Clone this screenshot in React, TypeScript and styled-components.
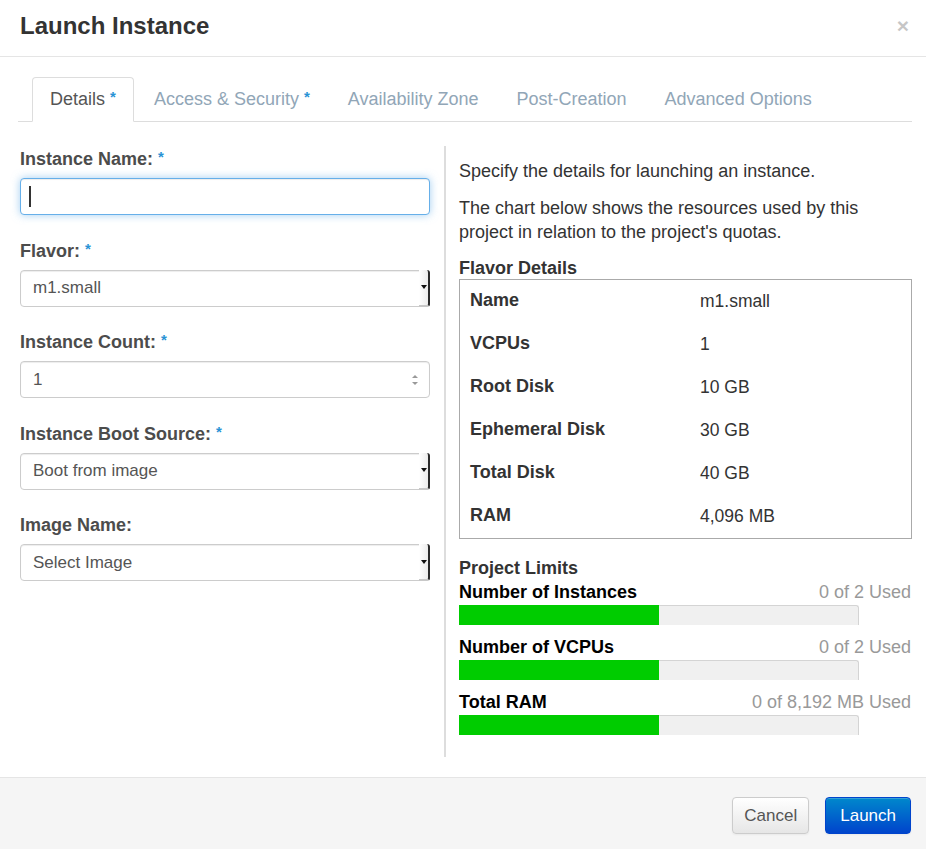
import React from "react";
import styled, { createGlobalStyle } from "styled-components";

const GlobalStyle = createGlobalStyle`
    html, body {
        margin: 0;
        padding: 0;
        background: #fff;
    }
    body {
        font-family: "Liberation Sans", Arial, Helvetica, sans-serif;
        color: #333;
    }
`;

const Modal = styled.div`
    width: 926px;
    height: 849px;
    display: flex;
    flex-direction: column;
    background: #fff;
    overflow: hidden;
`;

const Header = styled.div`
    display: flex;
    align-items: center;
    justify-content: space-between;
    padding: 0 17px 0 20px;
    border-bottom: 1px solid #e5e5e5;
    box-sizing: border-box;
    height: 57px;
`;

const Title = styled.h3`
    margin: 0 0 4px;
    font-size: 24px;
    font-weight: bold;
    line-height: 26px;
    color: #333;
`;

const Close = styled.span`
    font-size: 21px;
    font-weight: bold;
    line-height: 1;
    color: #000;
    opacity: 0.22;
    margin-bottom: 6px;
`;

const Body = styled.div`
    flex: 1;
    padding: 20px 14px 20px 18px;
    display: flex;
    flex-direction: column;
    min-height: 0;
`;

const Tabs = styled.ul`
    display: flex;
    margin: 0;
    padding: 0 0 0 14px;
    list-style: none;
    border-bottom: 1px solid #ddd;
    height: 44px;
`;

const Tab = styled.li<{ $active?: boolean }>`
    margin-right: 2px;
    margin-bottom: -1px;
    padding: 10px 17px 12px;
    font-size: 18px;
    line-height: 22px;
    border: 1px solid ${(p) => (p.$active ? "#ddd" : "transparent")};
    border-bottom-color: ${(p) => (p.$active ? "#fff" : "transparent")};
    border-radius: 4px 4px 0 0;
    background: ${(p) => (p.$active ? "#fff" : "transparent")};
    color: ${(p) => (p.$active ? "#555" : "#91a6b7")};
    white-space: nowrap;
`;

const Req = styled.span`
    display: inline-block;
    line-height: 0;
    color: #2a93d5;
    font-weight: bold;
    font-size: 15px;
    vertical-align: 3px;
`;

const Columns = styled.div`
    flex: 1;
    display: grid;
    grid-template-columns: 410px 1fr;
    column-gap: 14px;
    margin-top: 24px;
    padding-left: 2px;
    min-height: 0;
`;

const LeftCol = styled.div`
    padding-top: 2px;
`;

const FormGroup = styled.div`
    margin-bottom: 24.5px;
`;

const Label = styled.div`
    font-size: 18px;
    line-height: 22px;
    height: 22px;
    font-weight: bold;
    color: #4c4c4c;
    margin-bottom: 8px;
`;

const Field = styled.div<{ $focus?: boolean }>`
    height: 37px;
    box-sizing: border-box;
    display: flex;
    align-items: center;
    justify-content: space-between;
    padding-left: 12px;
    border: 1px solid ${(p) => (p.$focus ? "#66afe9" : "#ccc")};
    border-radius: 4px;
    background: #fff;
    font-size: 17px;
    color: #555;
    box-shadow: ${(p) =>
        p.$focus
            ? "inset 0 1px 1px rgba(0,0,0,.075), 0 0 8px rgba(102,175,233,.6)"
            : "inset 0 1px 1px rgba(0,0,0,.075)"};
`;

const Caret = styled.span`
    width: 2px;
    height: 21px;
    background: #333;
    margin-left: -4px;
`;

const SelectArrow = styled.span`
    align-self: stretch;
    width: 9px;
    margin: -1px -1px -1px 0;
    display: flex;
    align-items: center;
    justify-content: center;
    background: linear-gradient(to right, #fff, #ececec);
    border-right: 2px solid #2a2a2a;
    border-bottom: 2px solid #c8c8c8;
    border-radius: 0 3px 3px 0;
    &::after {
        content: "";
        border-left: 3px solid transparent;
        border-right: 3px solid transparent;
        border-top: 4px solid #111;
    }
`;

const Spinner = styled.span`
    display: flex;
    flex-direction: column;
    gap: 4px;
    margin-right: 11px;
    &::before,
    &::after {
        content: "";
        border-left: 3px solid transparent;
        border-right: 3px solid transparent;
    }
    &::before {
        border-bottom: 3px solid #999;
    }
    &::after {
        border-top: 3px solid #999;
    }
`;

const RightCol = styled.div`
    border-left: 2px solid #ddd;
    padding: 13px 0 0 13px;
    overflow: hidden;
`;

const Para = styled.p`
    margin: 0 0 13px;
    font-size: 18px;
    line-height: 24px;
    color: #333;
`;

const SubHead = styled.h4<{ $gap?: number }>`
    margin: ${(p) => p.$gap ?? 0}px 0 0;
    font-size: 18px;
    line-height: 22px;
    font-weight: bold;
    color: #333;
`;

const DetailTable = styled.div`
    border: 1px solid #aaa;
    display: grid;
    grid-template-columns: 230px 1fr;
    grid-auto-rows: 43px;
    padding-left: 10px;
`;

const Cell = styled.div<{ $head?: boolean }>`
    display: flex;
    align-items: center;
    padding-bottom: ${(p) => (p.$head ? "3px" : "0")};
    font-size: ${(p) => (p.$head ? "18px" : "17.5px")};
    font-weight: ${(p) => (p.$head ? "bold" : "normal")};
    color: #333;
`;

const Quota = styled.div`
    width: 452px;
    margin-top: 2px;
    margin-bottom: 11px;
`;

const QuotaHead = styled.div`
    display: flex;
    justify-content: space-between;
    align-items: center;
    height: 22px;
    line-height: 22px;
    margin-bottom: 2px;
`;

const QuotaName = styled.span`
    font-size: 18px;
    font-weight: bold;
    color: #000;
`;

const QuotaUsed = styled.span`
    font-size: 18px;
    color: #999;
`;

const Track = styled.div`
    position: relative;
    width: 400px;
    height: 20px;
    box-sizing: border-box;
    background: #f0f0f0;
    border-top: 1px solid #d4d4d4;
    border-right: 1px solid #d4d4d4;
    border-radius: 0 3px 0 0;
`;

const Fill = styled.div`
    position: absolute;
    top: -1px;
    left: 0;
    bottom: 0;
    background: #00cc00;
`;

const Footer = styled.div`
    height: 72px;
    box-sizing: border-box;
    border-top: 1px solid #e5e5e5;
    background: #f5f5f5;
    display: flex;
    justify-content: flex-end;
    align-items: flex-start;
    gap: 16px;
    padding: 19px 15px 0 0;
`;

const Button = styled.button<{ $primary?: boolean }>`
    height: 37px;
    padding: ${(p) => (p.$primary ? "0 14px" : "0 11px")};
    font-family: inherit;
    font-size: 17px;
    border-radius: 4px;
    border: 1px solid ${(p) => (p.$primary ? "#0044cc" : "#ccc")};
    background: ${(p) =>
        p.$primary
            ? "linear-gradient(to bottom, #0088cc, #0044cc)"
            : "linear-gradient(to bottom, #fff, #e6e6e6)"};
    color: ${(p) => (p.$primary ? "#fff" : "#555")};
    box-shadow: inset 0 1px 0 rgba(255, 255, 255, 0.2), 0 1px 2px rgba(0, 0, 0, 0.05);
`;

const flavor = [
    ["Name", "m1.small"],
    ["VCPUs", "1"],
    ["Root Disk", "10 GB"],
    ["Ephemeral Disk", "30 GB"],
    ["Total Disk", "40 GB"],
    ["RAM", "4,096 MB"],
];

const quotas = [
    { name: "Number of Instances", used: "0 of 2 Used", pct: 50 },
    { name: "Number of VCPUs", used: "0 of 2 Used", pct: 50 },
    { name: "Total RAM", used: "0 of 8,192 MB Used", pct: 50 },
];

export default function App() {
    return (
        <>
            <GlobalStyle />
            <Modal>
                <Header>
                    <Title>Launch Instance</Title>
                    <Close>×</Close>
                </Header>
                <Body>
                    <Tabs>
                        <Tab $active>
                            Details <Req>*</Req>
                        </Tab>
                        <Tab>
                            Access &amp; Security <Req>*</Req>
                        </Tab>
                        <Tab>Availability Zone</Tab>
                        <Tab>Post-Creation</Tab>
                        <Tab>Advanced Options</Tab>
                    </Tabs>
                    <Columns>
                        <LeftCol>
                            <FormGroup>
                                <Label>
                                    Instance Name: <Req>*</Req>
                                </Label>
                                <Field $focus>
                                    <Caret />
                                </Field>
                            </FormGroup>
                            <FormGroup>
                                <Label>
                                    Flavor: <Req>*</Req>
                                </Label>
                                <Field>
                                    m1.small
                                    <SelectArrow />
                                </Field>
                            </FormGroup>
                            <FormGroup>
                                <Label>
                                    Instance Count: <Req>*</Req>
                                </Label>
                                <Field>
                                    1
                                    <Spinner />
                                </Field>
                            </FormGroup>
                            <FormGroup>
                                <Label>
                                    Instance Boot Source: <Req>*</Req>
                                </Label>
                                <Field>
                                    Boot from image
                                    <SelectArrow />
                                </Field>
                            </FormGroup>
                            <FormGroup>
                                <Label>Image Name:</Label>
                                <Field>
                                    Select Image
                                    <SelectArrow />
                                </Field>
                            </FormGroup>
                        </LeftCol>
                        <RightCol>
                            <Para>Specify the details for launching an instance.</Para>
                            <Para>
                                The chart below shows the resources used by this
                                <br />
                                project in relation to the project's quotas.
                            </Para>
                            <SubHead>Flavor Details</SubHead>
                            <DetailTable>
                                {flavor.map(([k, v]) => (
                                    <React.Fragment key={k}>
                                        <Cell $head>{k}</Cell>
                                        <Cell>{v}</Cell>
                                    </React.Fragment>
                                ))}
                            </DetailTable>
                            <SubHead $gap={18}>Project Limits</SubHead>
                            {quotas.map((q) => (
                                <Quota key={q.name}>
                                    <QuotaHead>
                                        <QuotaName>{q.name}</QuotaName>
                                        <QuotaUsed>{q.used}</QuotaUsed>
                                    </QuotaHead>
                                    <Track>
                                        <Fill style={{ width: `${q.pct}%` }} />
                                    </Track>
                                </Quota>
                            ))}
                        </RightCol>
                    </Columns>
                </Body>
                <Footer>
                    <Button>Cancel</Button>
                    <Button $primary>Launch</Button>
                </Footer>
            </Modal>
        </>
    );
}
